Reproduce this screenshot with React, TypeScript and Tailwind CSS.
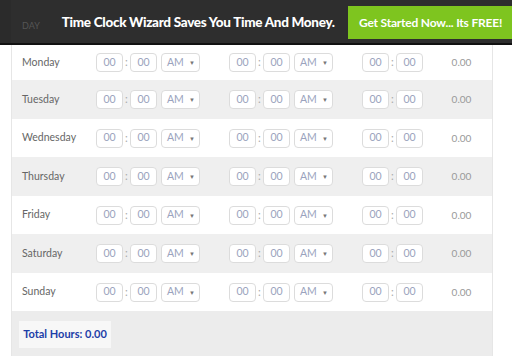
const DAYS = ['Monday', 'Tuesday', 'Wednesday', 'Thursday', 'Friday', 'Saturday', 'Sunday']
const ROW_H = ['h-[35px]', 'h-[39px]', 'h-[38px]', 'h-[39px]', 'h-[38px]', 'h-[39px]', 'h-[38px]']

function TimeBox() {
  return (
    <div className="w-[27px] h-[19px] border border-[#dcdcdc] rounded-[4px] bg-white flex items-center justify-center text-[10.5px] text-[#9aa3bd]">
      00
    </div>
  )
}

function AmSelect() {
  return (
    <div className="w-[39px] h-[19px] border border-[#dcdcdc] rounded-[4px] bg-white flex items-center justify-between pl-[5px] pr-[4px] text-[10.5px] text-[#9aa3bd]">
      <span>AM</span>
      <span className="text-[6px] text-[#777]">▼</span>
    </div>
  )
}

function TimeGroup({ select = true }: { select?: boolean }) {
  return (
    <div className="flex items-center">
      <TimeBox />
      <span className="w-[7px] text-center text-[11px] text-[#aaa]">:</span>
      <TimeBox />
      {select && (
        <div className="ml-[4px]">
          <AmSelect />
        </div>
      )}
    </div>
  )
}

export default function App() {
  return (
    <div className="w-[512px] h-[356px] overflow-hidden bg-white" style={{ fontFamily: 'Lato, "Open Sans", sans-serif' }}>
      {/* ── banner ── */}
      <div className="h-[45px] bg-[#2b2b2b] border-b-[2px] border-[#111] flex">
        <div className="w-[11px]" />
        <div className="flex-1 bg-[#2e2e2e] flex items-start whitespace-nowrap">
          <span className="mt-[19px] ml-[11px] text-[9px] text-[#555] uppercase">Day</span>
          <span className="mt-[12px] ml-[22px] text-[13.5px] font-black text-white tracking-[-0.3px]">
            Time Clock Wizard Saves You Time And Money.
          </span>
          <div className="ml-auto mt-[6px] w-[164px] h-[33px] bg-[#7ec51f] flex items-center pl-[11px] text-[12px] font-bold text-white tracking-[-0.2px]">
            Get Started Now... Its FREE!
          </div>
        </div>
      </div>

      {/* ── table ── */}
      <div className="ml-[11px] w-[482px] border-l border-r border-[#e6e6e6]">
        {DAYS.map((d, i) => (
          <div key={d} className={`${ROW_H[i]} flex items-center ${i % 2 === 1 ? 'bg-[#efefef]' : 'bg-white'}`}>
            <div className="w-[84px] pl-[10px] text-[10.5px] text-[#666]">{d}</div>
            <TimeGroup />
            <div className="ml-[29px]">
              <TimeGroup />
            </div>
            <div className="ml-[29px]">
              <TimeGroup select={false} />
            </div>
            <div className="flex-1 text-center pl-[8px] text-[10px] text-[#999]">0.00</div>
          </div>
        ))}
        <div className="h-[45px] bg-[#ececec] pt-[10px] pl-[7px]">
          <div className="w-[92px] h-[27px] bg-[#f7f7f7] flex items-center justify-center text-[11px] font-bold text-[#1d3ea8]">
            Total Hours: 0.00
          </div>
        </div>
      </div>
    </div>
  )
}
